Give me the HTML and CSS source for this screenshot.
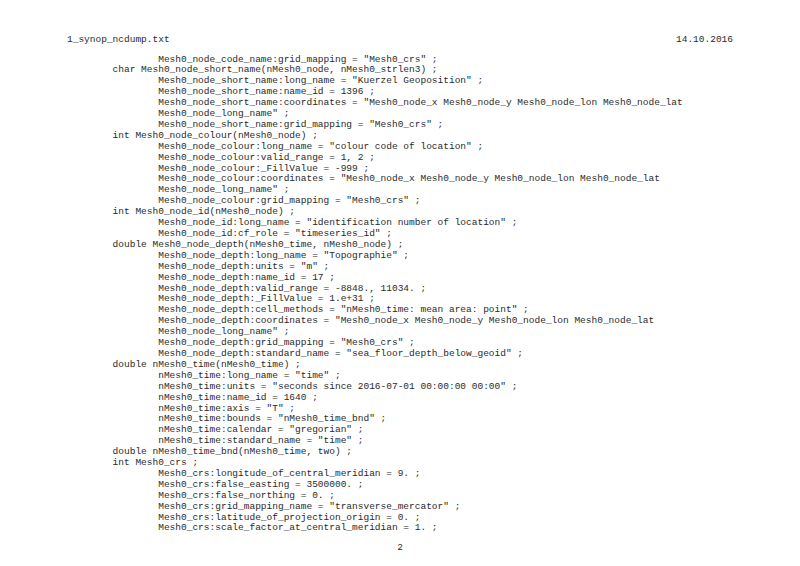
FILE: index.html
```html
<!DOCTYPE html>
<html lang="en">
<head>
<meta charset="utf-8">
<title>1_synop_ncdump.txt</title>
<link rel="stylesheet" href="styles.css">
</head>
<body>
<div class="page">
  <header class="page-head"><span>1_synop_ncdump.txt</span><span>14.10.2016</span></header>
  <pre class="dump">                Mesh0_node_code_name:grid_mapping = "Mesh0_crs" ;
        char Mesh0_node_short_name(nMesh0_node, nMesh0_strlen3) ;
                Mesh0_node_short_name:long_name = "Kuerzel Geoposition" ;
                Mesh0_node_short_name:name_id = 1396 ;
                Mesh0_node_short_name:coordinates = "Mesh0_node_x Mesh0_node_y Mesh0_node_lon Mesh0_node_lat
                Mesh0_node_long_name" ;
                Mesh0_node_short_name:grid_mapping = "Mesh0_crs" ;
        int Mesh0_node_colour(nMesh0_node) ;
                Mesh0_node_colour:long_name = "colour code of location" ;
                Mesh0_node_colour:valid_range = 1, 2 ;
                Mesh0_node_colour:_FillValue = -999 ;
                Mesh0_node_colour:coordinates = "Mesh0_node_x Mesh0_node_y Mesh0_node_lon Mesh0_node_lat
                Mesh0_node_long_name" ;
                Mesh0_node_colour:grid_mapping = "Mesh0_crs" ;
        int Mesh0_node_id(nMesh0_node) ;
                Mesh0_node_id:long_name = "identification number of location" ;
                Mesh0_node_id:cf_role = "timeseries_id" ;
        double Mesh0_node_depth(nMesh0_time, nMesh0_node) ;
                Mesh0_node_depth:long_name = "Topographie" ;
                Mesh0_node_depth:units = "m" ;
                Mesh0_node_depth:name_id = 17 ;
                Mesh0_node_depth:valid_range = -8848., 11034. ;
                Mesh0_node_depth:_FillValue = 1.e+31 ;
                Mesh0_node_depth:cell_methods = "nMesh0_time: mean area: point" ;
                Mesh0_node_depth:coordinates = "Mesh0_node_x Mesh0_node_y Mesh0_node_lon Mesh0_node_lat
                Mesh0_node_long_name" ;
                Mesh0_node_depth:grid_mapping = "Mesh0_crs" ;
                Mesh0_node_depth:standard_name = "sea_floor_depth_below_geoid" ;
        double nMesh0_time(nMesh0_time) ;
                nMesh0_time:long_name = "time" ;
                nMesh0_time:units = "seconds since 2016-07-01 00:00:00 00:00" ;
                nMesh0_time:name_id = 1640 ;
                nMesh0_time:axis = "T" ;
                nMesh0_time:bounds = "nMesh0_time_bnd" ;
                nMesh0_time:calendar = "gregorian" ;
                nMesh0_time:standard_name = "time" ;
        double nMesh0_time_bnd(nMesh0_time, two) ;
        int Mesh0_crs ;
                Mesh0_crs:longitude_of_central_meridian = 9. ;
                Mesh0_crs:false_easting = 3500000. ;
                Mesh0_crs:false_northing = 0. ;
                Mesh0_crs:grid_mapping_name = "transverse_mercator" ;
                Mesh0_crs:latitude_of_projection_origin = 0. ;
                Mesh0_crs:scale_factor_at_central_meridian = 1. ;</pre>
  <footer class="page-num">2</footer>
</div>
</body>
</html>
```

FILE: styles.css
```css
html, body {
  margin: 0;
  background: #ffffff;
}

.page {
  width: 800px;
  height: 566px;
  box-sizing: border-box;
  padding: 35px 67px 0;
  font-family: "Liberation Mono", "Courier New", monospace;
  font-size: 9.5px;
  line-height: 10.9px;
  color: #2a2a2a;
}

.page-head {
  display: flex;
  justify-content: space-between;
}

.dump {
  margin: 8.6px 0 0;
  font: inherit;
  white-space: pre;
}

.page-num {
  margin-top: 8.4px;
  text-align: center;
}
```
